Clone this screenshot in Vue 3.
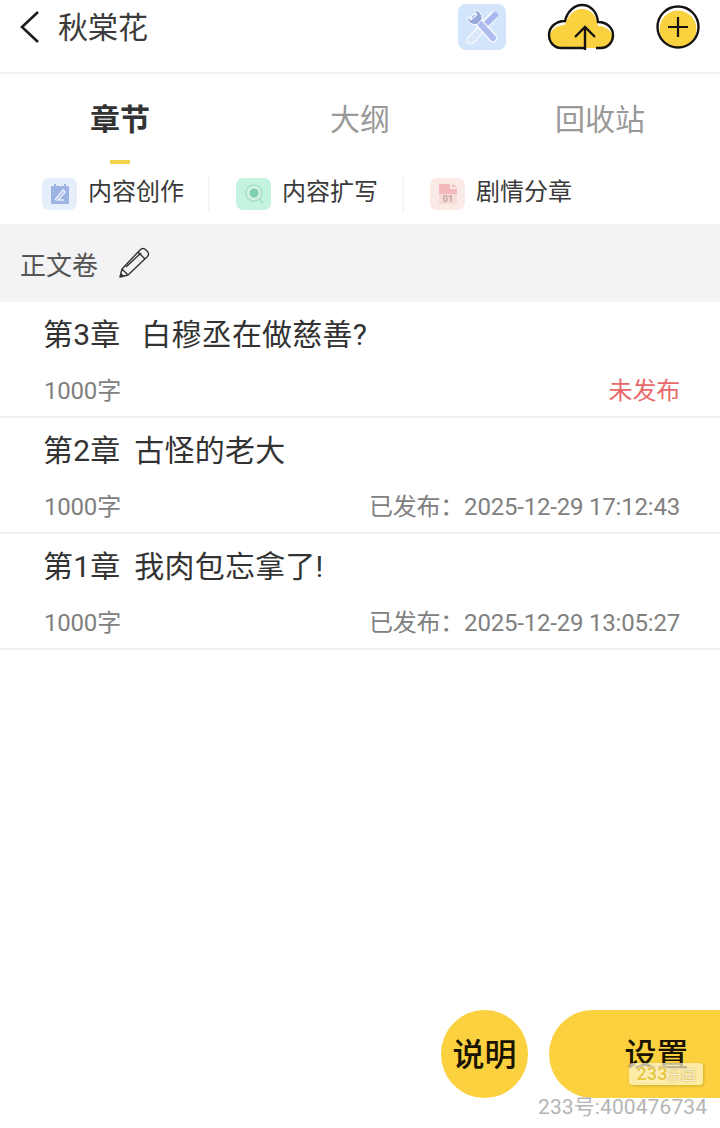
<script setup>
const tabs = [
  { name: '章节', active: true },
  { name: '大纲' },
  { name: '回收站' }
]

// full-width colon, as in the app
const colon = '\uFF1A'

const chapters = [
  { title: '第3章   白穆丞在做慈善?', count: '1000字', status: '未发布', draft: true },
  { title: '第2章  古怪的老大', count: '1000字', status: `已发布${colon}2025-12-29 17:12:43` },
  { title: '第1章  我肉包忘拿了!', count: '1000字', status: `已发布${colon}2025-12-29 13:05:27` }
]

const cloudShape = 'M39 46 H15 C8 46 3 40 3 33 C3 25 10 19 19 19 C21 10 28 3 36 3 C45 3 51 10 52 20 C61 20 67 26 67 33 C67 40 62 46 55 46 H50'
</script>

<template>
  <div class="page">
    <header class="topBar">
      <svg class="back" width="24" height="36" viewBox="0 0 24 36">
        <path d="M20 3 L4 18 L20 33" fill="none" stroke="#1c1c1c" stroke-width="2.6" />
      </svg>
      <span class="bookName">秋棠花</span>
      <div class="topIcons">
        <div class="toolBox">
          <svg width="38" height="38" viewBox="0 0 38 38">
            <path d="M8 32 L30 8" stroke="#fff" stroke-width="9" stroke-linecap="round" opacity="0.75" />
            <path d="M8 32 L24 15" stroke="#dbe7fb" stroke-width="6" stroke-linecap="round" />
            <path d="M24 15 L32 7" stroke="#a7b6ee" stroke-width="6" stroke-linecap="round" />
            <path d="M12 10 L30 30" stroke="#fff" stroke-width="9" stroke-linecap="round" opacity="0.75" />
            <path d="M12 10 L30 30" stroke="#aebcf0" stroke-width="6" stroke-linecap="round" />
            <path d="M4 9 A8 8 0 0 0 15 16 L19 11 A8 8 0 0 0 11 2 L14 7 L8 12 Z" fill="#97a9dc" stroke="#fff" stroke-width="1" />
          </svg>
        </div>
        <svg class="cloud" width="70" height="50" viewBox="0 0 70 50">
          <clipPath id="cloudClip"><path :d="cloudShape" /></clipPath>
          <g clip-path="url(#cloudClip)">
            <rect width="70" height="50" fill="#fff" />
            <path :d="cloudShape" fill="#fad13f" transform="translate(0 4)" />
            <rect x="3" y="38" width="64" height="8" fill="#fad13f" />
          </g>
          <path :d="cloudShape" fill="none" stroke="#161310" stroke-width="2.4" />
          <path d="M39 48 V26 M29 35 L39 25 L49 35" fill="none" stroke="#161310" stroke-width="2.4" />
        </svg>
        <svg class="plus" width="46" height="46" viewBox="0 0 46 46">
          <circle cx="23" cy="23" r="20.5" fill="#fff" />
          <circle cx="23" cy="25" r="18.5" fill="#fad13f" />
          <circle cx="23" cy="23" r="20.5" fill="none" stroke="#161310" stroke-width="2.4" />
          <path d="M23 13 V33 M13 23 H33" stroke="#161310" stroke-width="2.2" />
        </svg>
      </div>
    </header>

    <nav class="tabs">
      <div v-for="tab in tabs" :key="tab.name" class="tab" :class="{ active: tab.active }">
        {{ tab.name }}
      </div>
    </nav>

    <div class="tools">
      <div class="tool">
        <span class="toolIcon blue">
          <svg width="20" height="22" viewBox="0 0 20 22">
            <path d="M1 3 H4 V1 H6 V3 H14 V1 H16 V3 H19 V21 H1 Z" fill="#9db3e3" />
            <path d="M5 17 L13 7 L15 9 L8 17 H14" fill="none" stroke="#e6edfb" stroke-width="1.6" />
          </svg>
        </span>
        <span class="toolName">内容创作</span>
      </div>
      <div class="tool">
        <span class="toolIcon green">
          <svg width="22" height="22" viewBox="0 0 22 22">
            <circle cx="11" cy="10" r="8" fill="#d3f2e5" stroke="#a3e0c8" stroke-width="1.5" />
            <circle cx="11" cy="10" r="4.5" fill="#7fcfae" />
            <path d="M16 16 L20 20" stroke="#a3e0c8" stroke-width="2" />
          </svg>
        </span>
        <span class="toolName">内容扩写</span>
      </div>
      <div class="tool">
        <span class="toolIcon red">
          <svg width="18" height="20" viewBox="0 0 18 20">
            <path d="M0 0 H11 V5 H18 V20 H0 Z" fill="#f5b8bc" />
            <path d="M0 10 H18 V20 H0 Z" fill="#f6dcd6" />
            <path d="M13 0 L18 3 H13 Z" fill="#f5b8bc" />
            <text x="9" y="18" text-anchor="middle" class="iconNum">01</text>
          </svg>
        </span>
        <span class="toolName">剧情分章</span>
      </div>
    </div>

    <div class="volume">
      <span>正文卷</span>
      <svg width="32" height="32" viewBox="0 0 32 32">
        <path d="M2 30 L4 22 L22 3 C24 1 26 1 28 3 L29 4 C31 6 31 8 29 10 L10 28 Z M4 22 L10 28 M20 5 L27 12 M8 20 L23 6" fill="none" stroke="#333" stroke-width="1.4" stroke-linejoin="round" />
        <path d="M2 30 L3 26 L6 29 Z" fill="#333" />
      </svg>
    </div>

    <ul class="chapterList">
      <li v-for="item in chapters" :key="item.title" class="chapter">
        <div class="chapterTitle">{{ item.title }}</div>
        <div class="chapterMeta">
          <span>{{ item.count }}</span>
          <span :class="{ draft: item.draft }">{{ item.status }}</span>
        </div>
      </li>
    </ul>

    <div class="actions">
      <button class="helpBtn">说明</button>
      <button class="setBtn">设置</button>
    </div>

    <!-- watermark sits over the buttons -->
    <div class="stamp"><b>233</b>乐园</div>
    <div class="mark">233号:400476734</div>
  </div>
</template>

<style>
html, body {
  margin: 0;
  background: #fff;
}
</style>

<style scoped>
.page {
  position: relative;
  width: 720px;
  height: 1128px;
  overflow: hidden;
  background: #fff;
  color: #333;
  font-family: "Roboto", "Noto Sans CJK SC", sans-serif;
}

.topBar {
  display: flex;
  align-items: center;
  height: 74px;
  padding: 0 18px 18px;
  box-sizing: border-box;
  border-bottom: 2px solid #f3f3f3;
}

.back {
  flex: none;
}

.bookName {
  margin: 2px 0 0 16px;
  font-size: 30px;
  line-height: 40px;
  color: #3b3b3b;
}

.topIcons {
  display: flex;
  align-items: center;
  margin-left: auto;
  margin-right: 1px;
}

.toolBox {
  display: flex;
  align-items: center;
  justify-content: center;
  width: 48px;
  height: 46px;
  border-radius: 8px;
  background: #d3e5fa;
}

.cloud {
  margin-left: 40px;
}

.plus {
  margin-left: 39px;
}

.tabs {
  display: grid;
  grid-template-columns: 240px 240px 240px;
  height: 90px;
}

.tab {
  position: relative;
  padding-top: 24px;
  text-align: center;
  font-size: 30px;
  line-height: 44px;
  color: #999;
}

.tab.active {
  font-weight: 700;
  color: #333;
}

.tab.active::after {
  content: "";
  position: absolute;
  left: 110px;
  bottom: 0;
  width: 20px;
  height: 4px;
  background: #f2d44f;
}

.tools {
  display: grid;
  grid-template-columns: repeat(3, 194px);
  align-items: center;
  height: 60px;
  padding-left: 16px;
}

.tool {
  display: flex;
  align-items: center;
  gap: 11px;
  height: 36px;
  padding-left: 26px;
  border-right: 2px solid #f5f5f5;
  font-size: 24px;
  color: #3a3a3a;
  box-sizing: border-box;
}

.tool:last-child {
  border-right: 0;
}

.toolName {
  padding-bottom: 9px;
}

.toolIcon {
  display: flex;
  align-items: center;
  justify-content: center;
  width: 35px;
  height: 32px;
  border-radius: 7px;
}

.blue {
  background: #e6eefb;
}

.green {
  background: #c4f3e0;
}

.red {
  background: #fbe9e6;
}

.iconNum {
  font-size: 9px;
  font-weight: 700;
  fill: #c9a09c;
}

.volume {
  display: flex;
  align-items: center;
  gap: 20px;
  height: 78px;
  padding-left: 20px;
  background: #f3f3f5;
  font-size: 26px;
  color: #555;
}

.chapterList {
  margin: 0;
  padding: 0;
  list-style: none;
}

.chapter {
  height: 116px;
  padding: 12px 40px 0 44px;
  box-sizing: border-box;
  border-bottom: 2px solid #f2f2f2;
}

.chapterTitle {
  margin-left: -1px;
  font-size: 30px;
  line-height: 42px;
  letter-spacing: 0.2px;
  word-spacing: -0.7px;
  white-space: pre-wrap;
  color: #333;
}

.chapterMeta {
  display: flex;
  justify-content: space-between;
  margin-top: 18px;
  font-size: 24px;
  line-height: 34px;
  letter-spacing: -0.2px;
  color: #808080;
}

.draft {
  color: #e8696b;
}

.actions {
  position: absolute;
  top: 1010px;
  left: 441px;
  right: 0;
  display: flex;
  gap: 21px;
}

.actions button {
  height: 88px;
  padding: 0 0 5px;
  border: 0;
  background: #fbd13f;
  color: #1a1300;
  font-family: inherit;
  font-size: 32px;
  font-weight: 500;
}

.helpBtn {
  flex: none;
  width: 87px;
  border-radius: 50%;
}

.setBtn {
  flex: 1;
  border-radius: 44px 0 0 44px;
  text-indent: 44px;
}

.stamp {
  position: absolute;
  left: 629px;
  top: 1063px;
  width: 74px;
  height: 22px;
  border-radius: 4px;
  background: rgba(255, 245, 205, 0.72);
  box-shadow: 1px 1px 3px rgba(150, 120, 20, 0.4);
  color: #f7f2d8;
  font-size: 14px;
  line-height: 22px;
  text-align: center;
  white-space: nowrap;
  text-shadow: 0 0 2px #b99c35;
}

.stamp b {
  color: #e6c83f;
  font-size: 18px;
  text-shadow: 0 0 1px #fff, 0 0 2px #fff;
}

.mark {
  position: absolute;
  left: 538px;
  top: 1094px;
  font-size: 21px;
  line-height: 26px;
  letter-spacing: 0.1px;
  color: #b5b5b5;
  white-space: nowrap;
}
</style>
